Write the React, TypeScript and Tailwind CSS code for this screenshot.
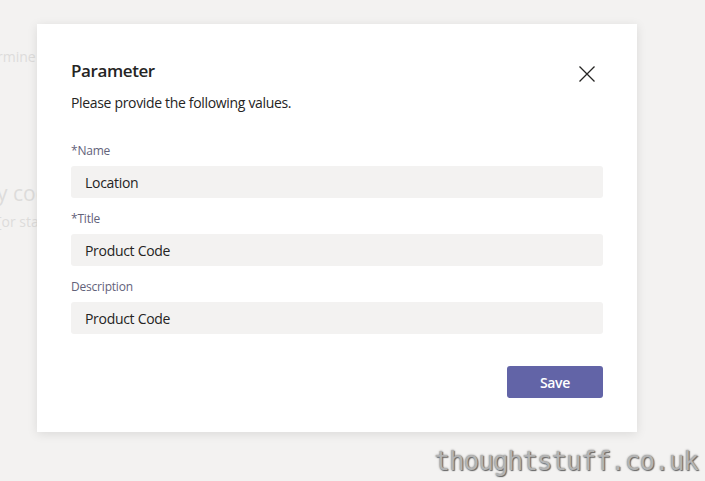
import React from "react";

const fields = [
  { label: "*Name", value: "Location" },
  { label: "*Title", value: "Product Code" },
  { label: "Description", value: "Product Code" },
];

function CloseIcon() {
  return (
    <svg width="16" height="16" viewBox="0 0 16 16" fill="none">
      <path d="M0.5 0.5 L15.5 15.5 M15.5 0.5 L0.5 15.5" stroke="#252423" strokeWidth="1.3" />
    </svg>
  );
}

export default function App() {
  return (
    <div className="relative w-[705px] h-[481px] overflow-hidden bg-[#f3f2f1] font-['Open_Sans',sans-serif]">
      {/* faded page behind the dialog */}
      <div className="flex flex-col text-[#dddcdb] whitespace-nowrap -ml-[3px]">
        <div className="mt-[47px] h-5 text-[14px] leading-5">rmine</div>
        <div className="mt-[112px] h-[28px] text-[21px] leading-[28px]">y code</div>
        <div className="mt-[5px] h-5 text-[14px] leading-5">[or status</div>
        <div className="mt-[115px] h-5 text-[14px] leading-5 -ml-[5px]">e</div>
      </div>

      {/* dialog */}
      <div className="absolute left-[37px] top-[24px] w-[600px] h-[408px] bg-white shadow-[0_2px_10px_rgba(0,0,0,0.1)] px-[34px] pt-[35px] pb-[34px] flex flex-col">
        <div className="flex h-6 items-start justify-between">
          <h1 className="text-[17px] leading-6 font-semibold tracking-[-0.4px] text-[#252423]">Parameter</h1>
          <button className="w-8 h-8 -mt-[1px] flex items-center justify-center">
            <CloseIcon />
          </button>
        </div>
        <p className="mt-[10px] text-[14px] leading-5 tracking-[-0.33px] text-[#252423]">Please provide the following values.</p>

        <div className="mt-[30px] flex flex-col gap-[13px]">
          {fields.map((f) => (
            <div key={f.label} className="flex flex-col">
              <label className="text-[12px] leading-4 tracking-[-0.2px] text-[#63627a]">{f.label}</label>
              <div className="mt-[7px] h-8 rounded-[3px] bg-[#f3f2f1] px-[14px] flex items-center text-[14px] tracking-[-0.3px] text-[#252423]">
                {f.value}
              </div>
            </div>
          ))}
        </div>

        <div className="mt-[32px] flex justify-end">
          <button className="w-[96px] h-8 rounded-[3px] bg-[#6264a7] text-white text-[14px] font-semibold tracking-[-0.3px]">
            Save
          </button>
        </div>
      </div>

      {/* watermark */}
      <div className="absolute right-[7px] bottom-[4px] font-['DejaVu_Sans_Mono',monospace] text-[26px] leading-8 tracking-[-1px] text-[#b4b4b4] [text-shadow:1px_1px_1px_#666,0_0_2px_#777]">
        thoughtstuff.co.uk
      </div>
    </div>
  );
}
